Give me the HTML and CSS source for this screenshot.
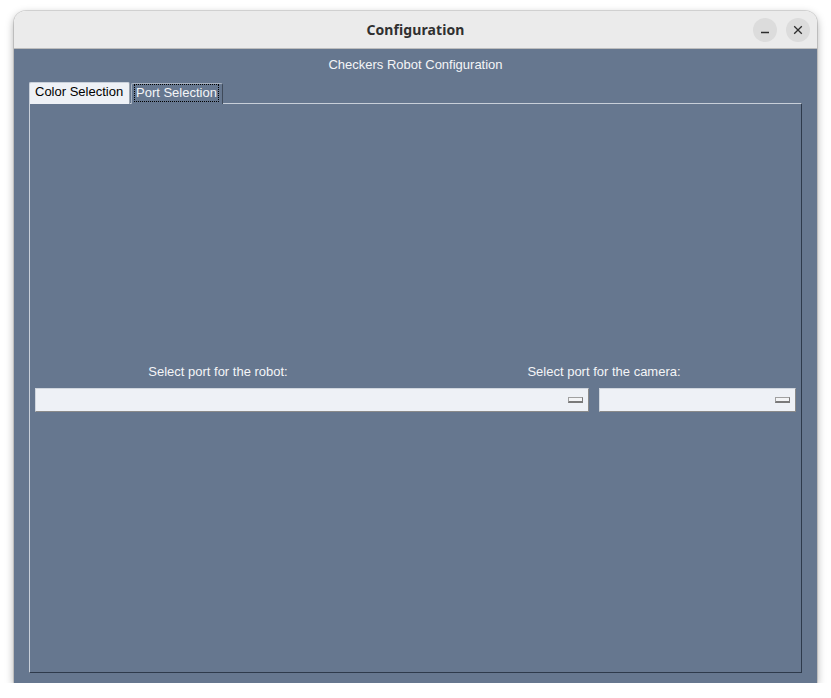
FILE: index.html
```html
<!DOCTYPE html>
<html>
<head>
<meta charset="utf-8">
<title>Configuration</title>
<link rel="stylesheet" href="styles.css">
</head>
<body>
<div class="window">
  <div class="titlebar">
    <span class="title">Configuration</span>
    <div class="controls">
      <span class="ctl"><svg width="10" height="10" viewBox="0 0 10 10"><path d="M1 7.5h8" stroke="#2e2e2e" stroke-width="1.3"/></svg></span>
      <span class="ctl"><svg width="10" height="10" viewBox="0 0 10 10"><path d="M1.2 1.2l7.6 7.6M8.8 1.2l-7.6 7.6" stroke="#2e2e2e" stroke-width="1.3"/></svg></span>
    </div>
  </div>
  <div class="content">
    <div class="heading">Checkers Robot Configuration</div>
    <div class="notebook">
      <div class="tabs">
        <div class="tab active">Color Selection</div>
        <div class="tab"><span class="focus">Port Selection</span></div>
      </div>
      <div class="pane">
        <div class="labels">
          <div class="lbl">Select port for the robot:</div>
          <div class="lbl">Select port for the camera:</div>
        </div>
        <div class="combos">
          <div class="combo"><span class="arrow"></span></div>
          <div class="combo"><span class="arrow"></span></div>
        </div>
      </div>
    </div>
  </div>
</div>
</body>
</html>
```
FILE: styles.css
```css
html, body {
  margin: 0;
  padding: 0;
  background: #ffffff;
}
body {
  padding: 11px 0 0 14px;
  font-family: "Liberation Sans", Arial, sans-serif;
}
.window {
  width: 803px;
  height: 672px;
  border-radius: 12px 12px 0 0;
  box-shadow: 0 3px 9px rgba(0,0,0,0.35), 0 0 0 1px rgba(0,0,0,0.12);
  display: flex;
  flex-direction: column;
  overflow: hidden;
}
.titlebar {
  height: 37px;
  flex: none;
  background: #ebebeb;
  border-bottom: 1px solid #bdbdbd;
  position: relative;
  display: flex;
  align-items: center;
  justify-content: center;
}
.title {
  font-family: "Noto Sans", "DejaVu Sans", sans-serif;
  font-weight: 700;
  font-size: 14px;
  color: #303030;
  letter-spacing: 0.1px;
}
.controls {
  position: absolute;
  right: 7px;
  top: 7px;
  display: flex;
  gap: 9px;
}
.ctl {
  width: 24px;
  height: 24px;
  border-radius: 50%;
  background: #dcdcdc;
  display: flex;
  align-items: center;
  justify-content: center;
}
.content {
  flex: 1;
  background: #66778f;
  display: flex;
  flex-direction: column;
  padding: 0 15px 10px 15px;
}
.heading {
  color: #f4f5f7;
  font-size: 13px;
  line-height: 16px;
  text-align: center;
  padding-top: 8px;
  margin-bottom: 10px;
}
.notebook {
  flex: 1;
  display: flex;
  flex-direction: column;
}
.tabs {
  display: flex;
  height: 21px;
  align-items: flex-end;
  position: relative;
  z-index: 1;
  margin-bottom: -1px;
}
.tab {
  height: 21px;
  box-sizing: border-box;
  white-space: nowrap;
  font-size: 13px;
  line-height: 16px;
  padding: 1px 0 0 5px;
  color: #f4f5f7;
  border: 1px solid #a9b3c1;
  border-right-color: #3f4a5a;
  border-bottom: none;
  border-radius: 2px 2px 0 0;
  background: #66778f;
  margin-left: 1px;
  width: 92px;
}
.tab.active {
  background: #eef1f6;
  color: #000000;
  border-color: #c9d0da;
  border-right-color: #9aa3ae;
  margin-left: 0;
  width: 101px;
  height: 22px;
  padding-left: 5px;
}
.focus {
  display: inline-block;
  outline: 1px dotted #000000;
  padding: 0 1px;
  margin-left: -2px;
  line-height: 16px;
}
.pane {
  flex: 1;
  border: 1px solid #c8cfd9;
  border-right-color: #2e3a4b;
  border-bottom-color: #2e3a4b;
  padding-top: 260px;
}
.labels {
  display: grid;
  grid-template-columns: 386px 386px;
  margin-left: -5px;
}
.lbl {
  color: #f4f5f7;
  font-size: 13px;
  line-height: 16px;
  text-align: center;
}
.combos {
  display: grid;
  grid-template-columns: 554px 197px;
  column-gap: 10px;
  margin: 8px 0 0 5px;
}
.combo {
  height: 24px;
  box-sizing: border-box;
  background: #eef1f6;
  border: 1px solid #d0d6de;
  border-right-color: #8a8a8a;
  border-bottom-color: #8a8a8a;
  display: flex;
  align-items: center;
  justify-content: flex-end;
  padding-right: 5px;
}
.arrow {
  width: 15px;
  height: 6px;
  box-sizing: border-box;
  background: #f3f4f6;
  border: 1px solid #a0a0a0;
  border-right-color: #7a7a7a;
  border-bottom: 2px solid #7a7a7a;
}
```
